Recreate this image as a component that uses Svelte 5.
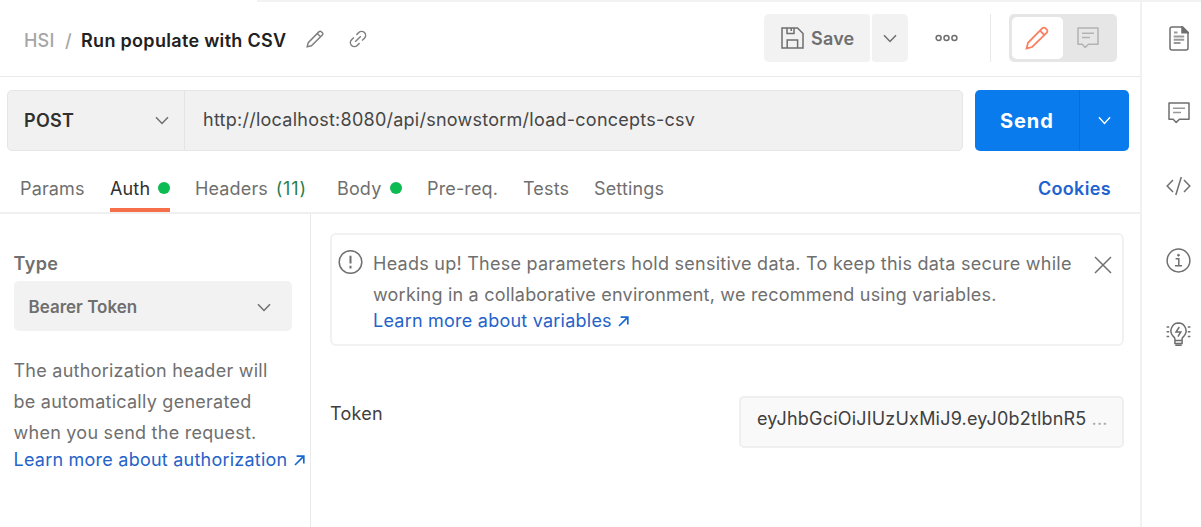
<script>
  const tabs = [
    { label: 'Params', width: 65, gap: 25 },
    { label: 'Auth', width: 60, gap: 25, dot: true, active: true },
    { label: 'Headers', width: 112, gap: 30, count: '(11)' },
    { label: 'Body', width: 65, gap: 25, dot: true },
    { label: 'Pre-req.', width: 71, gap: 25 },
    { label: 'Tests', width: 46, gap: 25 },
    { label: 'Settings', width: 73, gap: 0 }
  ];
</script>

{#snippet chevron(w)}
  <svg class="chev" width={w} height="9" viewBox="0 0 14 9" preserveAspectRatio="none"><path d="M1 1.2 7 7.4l6-6.2" /></svg>
{/snippet}

{#snippet pencil(s)}
  <svg width={s} height={s} viewBox="0 0 24 24"><path d="M1.5 22.5 3 16.8 17.1 2.1a2.2 2.2 0 0 1 3.1 0l1.7 1.7a2.2 2.2 0 0 1 0 3.1L7.2 21zM14.8 4.6l4.8 4.8M3.2 16.8 16.6 9.9" class="body-line" /></svg>
{/snippet}

{#snippet pen(s)}
  <svg width={s} height={s} viewBox="0 0 24 24"><path d="M1.6 22.4 3 16.8 17.4 2.2a2.1 2.1 0 0 1 3 0l1.4 1.4a2.1 2.1 0 0 1 0 3L7.2 21zM15 4.6l4.4 4.4" /></svg>
{/snippet}

{#snippet comment()}
  <svg width="22" height="22" viewBox="0 0 22 22"><path d="M1 1h20v16.2H11.5L8.2 20.4 5.2 17.2H1z" stroke-linejoin="round" /><path d="M5 6.2h12M5 10.4h8" class="faint" /></svg>
{/snippet}

<div class="app">
  <main>
    <header>
      <div class="crumb">
        <span class="parent">HSI</span><span class="slash">/</span><strong>Run populate with CSV</strong>
      </div>
      <span class="edit">{@render pen(18)}</span>
      <svg class="link" width="18" height="18" viewBox="0 0 18 18"><g transform="rotate(-45 9 9)"><path d="M7.2 13H3.9a4 4 0 0 1 0-8h3.3M10.8 5h3.3a4 4 0 0 1 0 8h-3.3M5 9h8" /></g></svg>
      <div class="actions">
        <button class="save">
          <svg width="23" height="22" viewBox="0 0 23 22"><path d="M1 1h15.5L22 6.5V21H1zM6 1v5.4h7V1M6.2 21v-8h10.4v8M10.2 1.5v2.4" /></svg>
          <span>Save</span>
        </button>
        <button class="savemore">{@render chevron(14)}</button>
        <svg class="dots" width="23" height="8" viewBox="0 0 23 8"><circle cx="3.6" cy="4" r="2.5" /><circle cx="11.5" cy="4" r="2.5" /><circle cx="19.4" cy="4" r="2.5" /></svg>
        <div class="toggle">
          <span class="on">{@render pen(24)}</span>
          <span class="off">{@render comment()}</span>
        </div>
      </div>
    </header>

    <section class="request">
      <div class="field">
        <div class="method"><span>POST</span>{@render chevron(14)}</div>
        <div class="url">http://localhost:8080/api/snowstorm/load-concepts-csv</div>
      </div>
      <div class="send"><span>Send</span><i>{@render chevron(13)}</i></div>
    </section>

    <nav>
      {#each tabs as t}
        <div class="tab" class:active={t.active} style="width:{t.width}px;margin-right:{t.gap}px">
          <span>{t.label}</span>
          {#if t.count}<b>{t.count}</b>{/if}
          {#if t.dot}<i></i>{/if}
        </div>
      {/each}
      <span class="cookies">Cookies</span>
    </nav>

    <section class="body">
      <aside>
        <h3>Type</h3>
        <div class="select"><span>Bearer Token</span>{@render chevron(14)}</div>
        <p>The authorization header will<br />be automatically generated<br />when you send the request.</p>
        <a class="more"><span>Learn more about authorization</span><svg width="11" height="11" viewBox="0 0 11 11"><path d="M1 10 9.6 1.4M2.6 1.2H9.8V8.6" /></svg></a>
      </aside>
      <div class="content">
        <div class="alert">
          <svg class="warn" width="25" height="26" viewBox="0 0 25 26"><circle cx="12.5" cy="13" r="11.3" /><path d="M12.5 6.8v7.6M12.5 16.8v2.6" stroke-width="2" /></svg>
          <div class="msg">
            <div>Heads up! These parameters hold sensitive data. To keep this data secure while</div>
            <div class="second">working in a collaborative environment, we recommend using variables.</div>
            <a class="more"><span>Learn more about variables</span><svg width="11" height="11" viewBox="0 0 11 11"><path d="M1 10 9.6 1.4M2.6 1.2H9.8V8.6" /></svg></a>
          </div>
          <svg class="close" width="18" height="18" viewBox="0 0 18 18"><path d="m1 1 16 16M17 1 1 17" /></svg>
        </div>
        <div class="token">
          <label for="token">Token</label>
          <div class="value" id="token"><span>eyJhbGciOiJIUzUxMiJ9.eyJ0b2tlbnR5</span><em>...</em></div>
        </div>
      </div>
    </section>
  </main>

  <div class="rail">
    <svg width="20" height="25" viewBox="0 0 20 25"><path d="M3 1h10.6L19 6.4V22a2 2 0 0 1-2 2H3a2 2 0 0 1-2-2V3a2 2 0 0 1 2-2z" /><path d="M13 .8V6.8H19.2z" fill="#6b6b6b" /><path d="M5 6.5h3.5M4.7 10.5h10.5M4.7 13.7h10.5M4.7 17h6.8" class="faint thick" /></svg>
    {@render comment()}
    <svg width="25" height="20" viewBox="0 0 25 20"><path d="M7 4 1.2 10 7 16M18 4l5.8 6L18 16M15.3 1 9.8 19" /></svg>
    <svg width="25" height="25" viewBox="0 0 25 25"><circle cx="12.5" cy="12.5" r="11.4" /><path d="M9.6 10.7h3.2v7M9 17.8h7" /><circle cx="12.5" cy="7.2" r="1" fill="#6b6b6b" stroke-width=".8" /></svg>
    <svg width="25" height="25" viewBox="0 0 25 25"><path d="M8.9 18.4v-1.7c0-1-1-1.7-2-2.8A7.7 7.7 0 0 1 12.5 1.1a7.7 7.7 0 0 1 5.6 12.8c-1 1.1-2 1.8-2 2.8v1.7zM8.9 18.4v3h7.2v-3M9.3 23.2h6.4" /><path d="m13.3 5-3.3 5h4.8L11.9 14.6" /><path d="M.6 5h2.6M.6 9.8h2.6M.6 14.6h2.6M21.8 5h2.6M21.8 9.8h2.6M21.8 14.6h2.6" /></svg>
  </div>
</div>

<style>
  :global(body) { margin: 0; background: #fff; }
  .app { width: 1201px; height: 527px; display: flex; overflow: hidden; font-family: Inter, sans-serif; font-size: 18px; color: #6f6f6f; background: linear-gradient(#f2f2f2, #f2f2f2) 257px 0 / 944px 2px no-repeat #fff; white-space: nowrap; }
  .app * { box-sizing: border-box; }
  svg { display: block; flex: none; fill: none; stroke: #6f6f6f; stroke-width: 1.5; }
  .faint { stroke: #999; }
  .thick { stroke-width: 1.9; }
  main { width: 1142px; border-right: 2px solid #f1f1f1; flex: none; }
  header { height: 77px; border-bottom: 1px solid #e9e9e9; padding: 3px 0 0 24px; display: flex; align-items: center; }
  .crumb { display: flex; width: 282px; font-weight: 500; color: #a6a6a6; letter-spacing: .2px; padding-top: 1px; }
  .parent { width: 41px; }
  .slash { width: 16px; }
  strong { font-weight: 600; color: #212121; letter-spacing: .31px; }
  .edit, .link { margin-top: -1px; }
  .edit svg, .link { stroke: #808080; }
  .edit svg { stroke-width: 2; }
  .link { margin-left: 25px; stroke-width: 1.5; }
  .actions { display: flex; align-items: center; margin: -3px 23px 0 auto; }
  button { border: 0; background: #f2f2f2; height: 48px; font: inherit; color: inherit; display: flex; align-items: center; padding: 0; }
  .save { width: 106px; border-radius: 5px 3px 3px 5px; padding-left: 17px; gap: 7px; font-weight: 600; letter-spacing: .2px; }
  .savemore { width: 36px; margin-left: 2px; border-radius: 3px 5px 5px 3px; justify-content: center; }
  .dots { margin: 0 32px 0 27px; }
  .toggle { display: flex; position: relative; margin-left: 19px; background: #e6e6e6; border-radius: 5px; width: 108px; height: 48px; padding: 3px; }
  .toggle::before { content: ''; position: absolute; left: -19px; top: 0; width: 1px; height: 48px; background: #e9e9e9; }
  .on { width: 51px; height: 42px; background: #fff; border-radius: 5px; display: grid; place-items: center; padding-right: 2px; }
  .on svg { stroke: #f98060; stroke-width: 1.8; }
  .off { flex: 1; display: grid; place-items: center; padding-right: 2px; }
  .off svg, .off .faint { stroke: #b3b3b3; }
  .request { display: flex; padding: 13px 0 0 7px; gap: 12px; }
  .field { width: 956px; height: 61px; display: flex; background: #f1f1f1; border: 1px solid #e6e6e6; border-radius: 5px; }
  .method { width: 177px; padding: 0 15px 0 16px; display: flex; align-items: center; justify-content: space-between; color: #303030; font-weight: 600; border-right: 1px solid #e4e4e4; letter-spacing: .3px; }
  .url { padding-left: 18px; line-height: 58px; color: #464646; letter-spacing: .25px; }
  .send { width: 154px; height: 61px; background: #097bed; border-radius: 5px; display: flex; color: #fff; font-weight: 700; font-size: 20px; line-height: 63px; letter-spacing: .9px; }
  .send span { width: 104px; padding-left: 25px; }
  .send i { width: 50px; border-left: 1px solid #096dd2; display: grid; place-items: center; }
  .send svg { stroke: #fff; }
  nav { height: 63px; border-bottom: 2px solid #f0f0f0; padding: 7px 29px 0 19px; display: flex; line-height: 61px; letter-spacing: .15px; }
  .tab { display: flex; height: 54px; }
  .tab:first-child { margin-left: 1px; }
  .tab i { width: 12px; height: 12px; border-radius: 50%; background: #0cbb52; margin: 24px 0 0 auto; }
  .tab b { font-weight: 400; color: #2a7f4f; margin-left: auto; letter-spacing: .9px; }
  .active { border-bottom: 4px solid #f5704a; color: #303030; }
  .cookies { margin-left: auto; color: #1f63cf; font-weight: 600; letter-spacing: .35px; }
  .body { display: flex; height: 313px; letter-spacing: .255px; }
  aside { width: 311px; border-right: 1px solid #e9e9e9; padding: 36px 0 0 13.5px; flex: none; }
  h3 { margin: 0; font-size: 18px; font-weight: 600; line-height: 27px; letter-spacing: .4px; }
  .select { width: 278px; height: 50px; margin-top: 4px; background: #f2f2f2; border-radius: 5px; padding: 2px 21px 0 15px; display: flex; align-items: center; justify-content: space-between; font-weight: 600; font-size: 17px; letter-spacing: 0; }
  p { margin: 24px 0 0; line-height: 31px; }
  .more { display: flex; align-items: center; gap: 7px; color: #2563c9; line-height: 24px; letter-spacing: .23px; }
  .more svg { stroke: #1768cf; stroke-width: 1.7; }
  .content { padding: 19px 0 0 19px; flex: 1; }
  .alert { width: 794px; height: 113px; border: 2px solid #f1f1f1; border-radius: 6px; display: flex; padding: 13px 0 0 6px; }
  .warn { margin-top: 1px; }
  .msg { width: 731px; padding-left: 10px; line-height: 31px; }
  .second { letter-spacing: .21px; }
  .msg .more { margin-top: -1px; gap: 6px; }
  .close { margin-top: 8px; }
  .token { display: flex; justify-content: space-between; width: 794px; margin-top: 50px; color: #404040; }
  label { line-height: 36px; }
  .value { width: 385px; height: 52px; background: #f9f9f9; border: 2px solid #efefef; border-radius: 5px; padding-left: 16px; line-height: 41px; display: flex; letter-spacing: .2px; }
  em { font-style: normal; color: #aaa; margin-left: 5px; }
  .rail { flex: 1; padding: 26px 0 0 14px; display: flex; flex-direction: column; align-items: center; }
  .rail svg:nth-child(2) { margin-top: 51px; }
  .rail svg:nth-child(3) { margin-top: 52px; }
  .rail svg:nth-child(4) { margin-top: 52px; }
  .rail svg:nth-child(5) { margin-top: 49px; }
</style>
